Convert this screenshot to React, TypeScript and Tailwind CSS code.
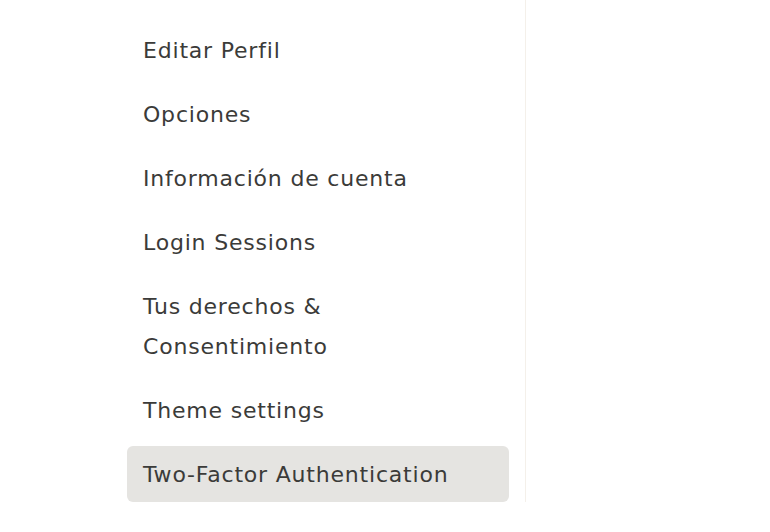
const items = [
  'Editar Perfil',
  'Opciones',
  'Información de cuenta',
  'Login Sessions',
  'Tus derechos & Consentimiento',
  'Theme settings',
  'Two-Factor Authentication',
];

export default function App() {
  return (
    <div className="flex h-[532px] w-full bg-white font-['DejaVu_Sans',sans-serif] text-[#3b3b39]">
      <nav className="ml-[127px] flex w-[399px] flex-col gap-2 self-start border-r border-[#f4f0ea] pr-4 pt-[22px]">
        {items.map((label, i) => (
          <a
            key={label}
            className={`block rounded-md px-4 pt-[9px] pb-[7px] text-[22px] leading-[40px] tracking-[0.8px] ${
              i === items.length - 1 ? 'bg-[#e5e4e1]' : ''
            }`}
          >
            {label === 'Tus derechos & Consentimiento' ? (
              <>
                Tus derechos &amp;
                <br />
                Consentimiento
              </>
            ) : (
              label
            )}
          </a>
        ))}
      </nav>
      <div className="flex-1" />
    </div>
  );
}
